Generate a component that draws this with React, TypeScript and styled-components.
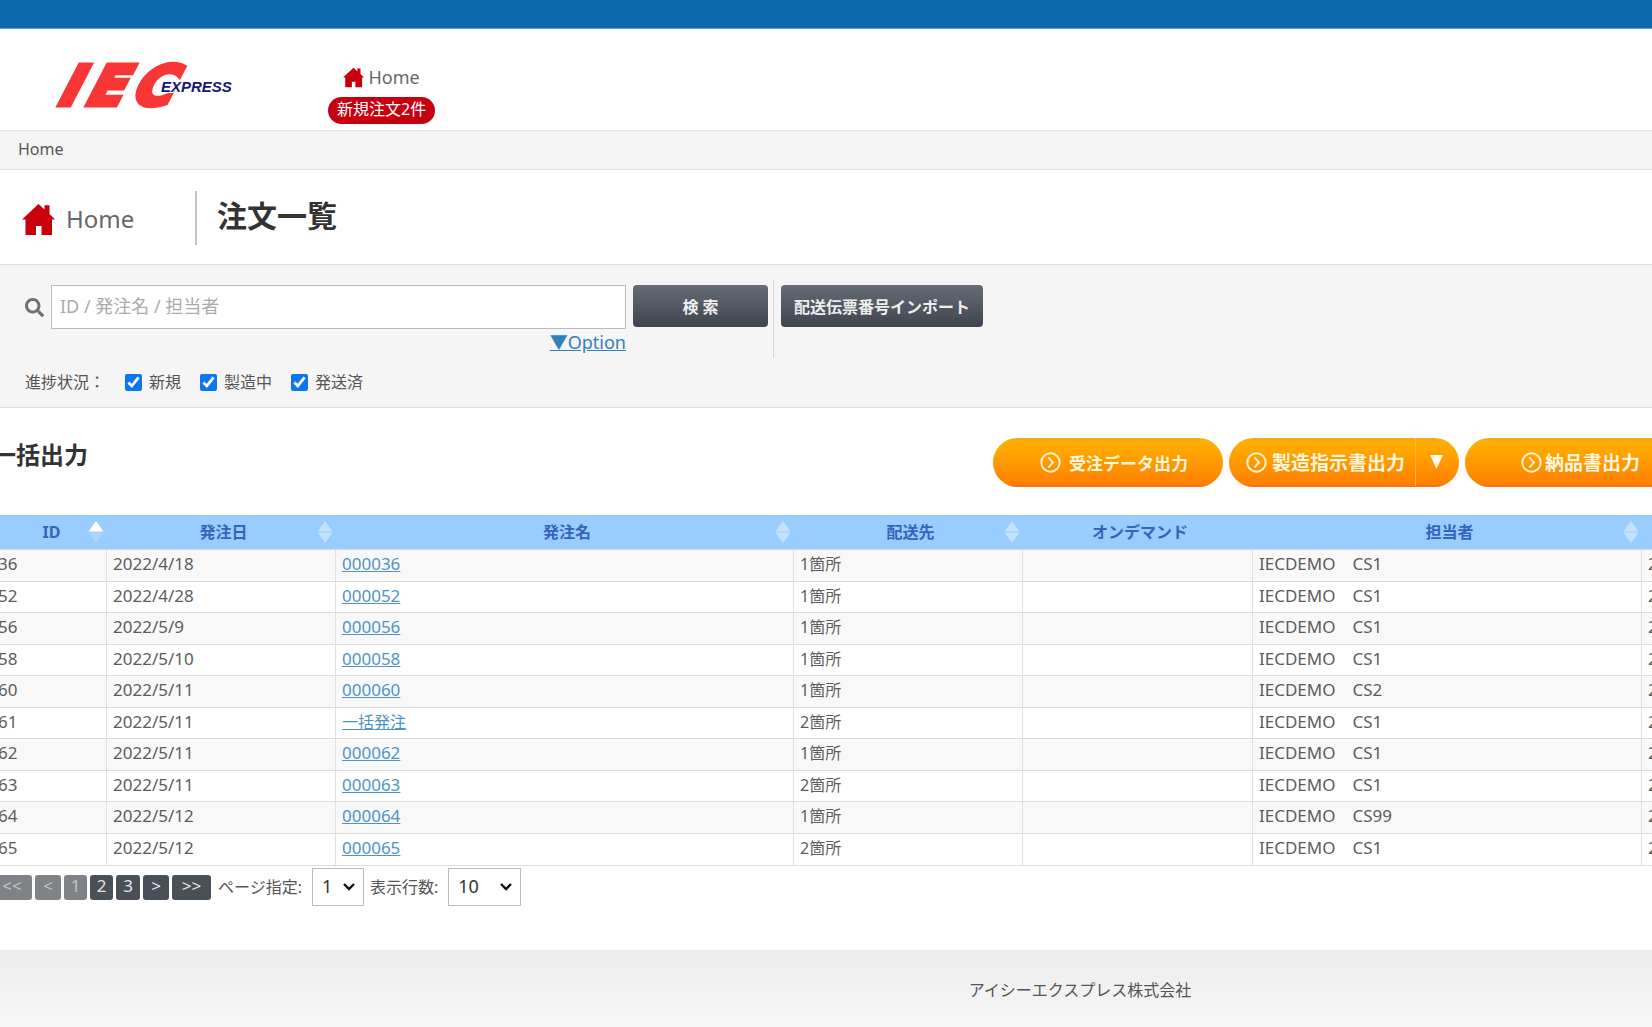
import React from "react";
import styled, { createGlobalStyle } from "styled-components";
import { FaSearch } from "react-icons/fa";

const sans = `"Noto Sans", "Noto Sans CJK JP", sans-serif`;

const GlobalStyle = createGlobalStyle`
  * { box-sizing: border-box; }
  body {
    margin: 0;
    background: #fff;
    color: #555;
    font: 16px/24px ${sans};
  }
`;

const Page = styled.div`
  min-height: 100vh;
  display: flex;
  flex-direction: column;
  overflow: hidden;
`;

const TopBar = styled.div`
  height: 29px;
  background: #0b6aac;
  border-bottom: 1px solid #5f9cc6;
`;

const Header = styled.header`
  height: 102px;
  display: flex;
  align-items: flex-start;
  gap: 91px;
  padding: 32px 0 0 55px;
  border-bottom: 1px solid #dfdfdf;
`;

const Nav = styled.nav`
  display: flex;
  flex-direction: column;
  align-items: center;
  gap: 4px;
`;

const NavLink = styled.a`
  display: flex;
  align-items: center;
  gap: 4px;
  font-size: 18px;
  line-height: 32px;
  color: #666;
  text-decoration: none;
`;

const Badge = styled.a`
  padding: 0 9px 3px;
  border-radius: 14px;
  background: #c7000f;
  color: #fff;
  text-decoration: none;
`;

const Breadcrumb = styled.nav`
  padding: 6px 18px 8px;
  background: #f5f5f5;
  border-bottom: 1px solid #dfdfdf;
`;

const TitleBar = styled.div`
  display: flex;
  align-items: center;
  height: 95px;
  padding: 2px 22px 0;
  border-bottom: 1px solid #dfdfdf;
`;

const Section = styled.div`
  display: flex;
  align-items: center;
  gap: 11px;
  width: 175px;
  height: 54px;
  padding-top: 2px;
  border-right: 2px solid #c4c4c4;
  font-size: 24px;
  color: #666;
`;

const PageTitle = styled.h1`
  margin: 0 0 4px 20px;
  font-size: 30px;
  line-height: 40px;
  color: #333;
`;

const SearchPanel = styled.form`
  height: 143px;
  padding: 15px 25px;
  background: #f5f5f5;
  border-bottom: 1px solid #dfdfdf;
`;

const SearchRow = styled.div`
  display: flex;
  align-items: flex-start;
`;

const SearchLabel = styled.label`
  display: flex;
  width: 26px;
  padding-top: 18px;
  color: #707070;
`;

const SearchField = styled.div`
  display: flex;
  flex-direction: column;
  align-items: flex-end;
  width: 575px;
  padding-top: 5px;
`;

const SearchInput = styled.input`
  width: 100%;
  height: 44px;
  padding: 0 8px 3px;
  border: 1px solid #bbb;
  background: #fff;
  font: 18px ${sans};
  color: #333;
  &::placeholder { color: #aaa; }
`;

const OptionLink = styled.a`
  font-size: 18px;
  line-height: 26px;
  color: #2f83bb;
`;

const ActionCell = styled.div<{ $divided?: boolean }>`
  height: 78px;
  padding: 5px 5px 0 7px;
  border-right: ${(p) => (p.$divided ? "1px solid #d4d4d4" : "0")};
`;

const DarkButton = styled.button<{ $width: number }>`
  width: ${(p) => p.$width}px;
  height: 42px;
  padding: 0 0 1px;
  border: 0;
  border-radius: 4px;
  background: linear-gradient(#666c75, #3e454e);
  color: #eee;
  font: bold 16px ${sans};
`;

const StatusRow = styled.fieldset`
  display: flex;
  align-items: center;
  gap: 19px;
  margin: 0;
  padding: 12px 0 0;
  border: 0;
`;

const StatusCaption = styled.span`
  width: 81px;
  white-space: nowrap;
`;

const CheckLabel = styled.label`
  display: flex;
  align-items: center;
  gap: 7px;
`;

const Checkbox = styled.input`
  width: 17px;
  height: 17px;
  margin: 0;
  accent-color: #0b76ef;
`;

const Main = styled.main`
  margin-left: -8px;
`;

const ExportBar = styled.div`
  width: 115%;
  display: flex;
  justify-content: space-between;
  padding: 30px 206px 28px 0;
`;

const ExportTitle = styled.h2`
  margin: 0;
  font-size: 24px;
  line-height: 34px;
  color: #333;
`;

const ButtonGroup = styled.div`
  display: flex;
  gap: 6px;
`;

const OrangeButton = styled.button<{ $size: number; $gap: number; $start?: number }>`
  display: flex;
  align-items: center;
  justify-content: ${(p) => (p.$start ? "flex-start" : "center")};
  gap: ${(p) => p.$gap}px;
  width: 230px;
  height: 49px;
  padding: 0 0 1px ${(p) => p.$start ?? 12}px;
  border: 0;
  border-radius: 25px;
  background: linear-gradient(#f3a61a, #ffb000 4px, #ff8000 46px, #ee7412);
  color: #fff6dc;
  font: bold ${(p) => p.$size}px ${sans};
  white-space: nowrap;
`;

const SplitArrow = styled.span`
  display: flex;
  align-items: center;
  align-self: stretch;
  margin-left: 5px;
  padding-left: 14px;
  border-left: 1px solid #ffb347;
`;

const Table = styled.table`
  width: 115%;
  table-layout: fixed;
  border-collapse: separate;
  border-spacing: 0;
`;

const Col = styled.col<{ $width?: number }>`
  width: ${(p) => (p.$width ? `${p.$width}px` : "auto")};
`;

const HeadCell = styled.th`
  height: 35px;
  padding: 0;
  background: #99ccff;
  border-bottom: 1px solid #cfdbe6;
  color: #3366bb;
`;

const HeadInner = styled.div`
  display: grid;
  grid-template-columns: 23px 1fr 19px;
  align-items: center;
`;

const Row = styled.tr`
  height: 31px;
  background: #fff;
  &:nth-child(odd) {
    height: 32px;
    background: #f9f8f9;
  }
  &:last-child {
    height: 32px;
  }
`;

const Cell = styled.td<{ $size?: number }>`
  padding: 0 6px 3px;
  border-right: 1px solid #e0e0e0;
  border-bottom: 1px solid #dcdcdc;
  font-size: ${(p) => p.$size ?? 17}px;
  line-height: 26px;
  white-space: nowrap;
  color: #5c5c5c;
`;

const OrderLink = styled.a`
  color: #4f94c4;
`;

const Pager = styled.div`
  display: flex;
  align-items: center;
  gap: 6px;
  height: 42px;
`;

const PageButtons = styled.div`
  display: flex;
  gap: 3px;
  padding-right: 1px;
`;

const PageButton = styled.button<{ $width: number }>`
  width: ${(p) => p.$width}px;
  height: 25px;
  padding: 0 0 2px;
  border: 0;
  border-radius: 3px;
  background: #495057;
  color: #e4e4e4;
  font: 17px/22px ${sans};
  &:disabled {
    background: #7f8387;
    color: #c2c4c6;
  }
`;

const PagerLabel = styled.label`
  display: flex;
  align-items: center;
  gap: 10px;
`;

const PagerSelect = styled.select<{ $width: number }>`
  appearance: none;
  width: ${(p) => p.$width}px;
  height: 38px;
  padding: 0 9px 2px;
  border: 1px solid #bbb;
  border-radius: 0;
  background: #fff
    url("data:image/svg+xml,%3Csvg xmlns='http://www.w3.org/2000/svg' width='12' height='8' fill='none' stroke='%23111' stroke-width='2.4'%3E%3Cpath d='M1 1l5 5 5-5'/%3E%3C/svg%3E")
    no-repeat right 8px center;
  color: #333;
  font: 18px ${sans};
`;

const Footer = styled.footer`
  flex: 1;
  margin-top: 42px;
  padding: 28px 0 25px 508px;
  background: linear-gradient(#ececec, #f7f7f7);
  text-align: center;
`;

const LogoDrawing = styled.svg`
  overflow: visible;
`;

function Logo() {
  return (
    <LogoDrawing width="182" height="54" viewBox="0 0 182 54" role="img" aria-label="IEC EXPRESS">
      <g
        fontFamily="DejaVu Sans"
        fontWeight="bold"
        fontStyle="italic"
        fontSize="55"
        fill="#f93636"
        stroke="#f93636"
        strokeWidth="5"
        transform="translate(0 44) skewX(-18)"
      >
        <text x="3" y="0">I</text>
        <text x="31" y="0">E</text>
        <text x="77" y="0">C</text>
      </g>
      <text
        x="106"
        y="31"
        fontFamily="Liberation Sans"
        fontWeight="bold"
        fontStyle="italic"
        fontSize="15"
        fill="#15157a"
        stroke="#fff"
        strokeWidth="2"
        paintOrder="stroke"
      >
        EXPRESS
      </text>
    </LogoDrawing>
  );
}

function House({ size }: { size: number }) {
  return (
    <svg width={size} height={size} viewBox="0 0 33 31" fill="#c9000a" aria-hidden="true">
      <path d="M16.5 0 22.5 5.6V1.2h5V10l5.5 5.6h-3V31H19.5v-9h-5.500v9H3.500V15.600H0Z" />
    </svg>
  );
}

function CircleChevron() {
  return (
    <svg width="21" height="21" viewBox="0 0 21 21" fill="none" stroke="#fff3c9" strokeWidth="2" aria-hidden="true">
      <circle cx="10.500" cy="10.500" r="9.200" />
      <path d="M8.300 5.300 13 10.500 8.300 15.700" />
    </svg>
  );
}

function SortMark({ ascending }: { ascending?: boolean }) {
  return (
    <svg width="16" height="22" viewBox="0 0 16 22" aria-hidden="true">
      <path d="M8 0 15.500 10.500H.5Z" fill={ascending ? "#fff" : "#c5e2fc"} />
      <path d="M8 22 15.500 11.500H.5Z" fill={ascending ? "#aed6fd" : "#c5e2fc"} />
    </svg>
  );
}

const columns: { title: string; width?: number; sort?: "asc" | "none" }[] = [
  { title: "ID", width: 115, sort: "asc" },
  { title: "発注日", width: 229, sort: "none" },
  { title: "発注名", sort: "none" },
  { title: "配送先", width: 229, sort: "none" },
  { title: "オンデマンド", width: 230 },
  { title: "担当者", width: 389, sort: "none" },
  { title: "", width: 259 },
];

const orders = [
  ["36", "2022/4/18", "000036", "1箇所", "CS1"],
  ["52", "2022/4/28", "000052", "1箇所", "CS1"],
  ["56", "2022/5/9", "000056", "1箇所", "CS1"],
  ["58", "2022/5/10", "000058", "1箇所", "CS1"],
  ["60", "2022/5/11", "000060", "1箇所", "CS2"],
  ["61", "2022/5/11", "一括発注", "2箇所", "CS1"],
  ["62", "2022/5/11", "000062", "1箇所", "CS1"],
  ["63", "2022/5/11", "000063", "2箇所", "CS1"],
  ["64", "2022/5/12", "000064", "1箇所", "CS99"],
  ["65", "2022/5/12", "000065", "2箇所", "CS1"],
];

const pages = [
  { text: "<<", width: 40, off: true },
  { text: "<", width: 26, off: true },
  { text: "1", width: 23, off: true },
  { text: "2", width: 23 },
  { text: "3", width: 24 },
  { text: ">", width: 26 },
  { text: ">>", width: 39 },
];

export default function App() {
  return (
    <Page>
      <GlobalStyle />
      <TopBar />
      <Header>
        <Logo />
        <Nav>
          <NavLink href="#home">
            <House size={21} />
            Home
          </NavLink>
          <Badge href="#new">新規注文2件</Badge>
        </Nav>
      </Header>
      <Breadcrumb>Home</Breadcrumb>
      <TitleBar>
        <Section>
          <House size={33} />
          Home
        </Section>
        <PageTitle>注文一覧</PageTitle>
      </TitleBar>

      <SearchPanel onSubmit={(e) => e.preventDefault()}>
        <SearchRow>
          <SearchLabel htmlFor="keyword" aria-label="キーワード">
            <FaSearch size={19} />
          </SearchLabel>
          <SearchField>
            <SearchInput id="keyword" type="text" placeholder="ID / 発注名 / 担当者" />
            <OptionLink href="#option">▼Option</OptionLink>
          </SearchField>
          <ActionCell $divided>
            <DarkButton $width={135} type="submit">検 索</DarkButton>
          </ActionCell>
          <ActionCell>
            <DarkButton $width={202} type="button">配送伝票番号インポート</DarkButton>
          </ActionCell>
        </SearchRow>
        <StatusRow>
          <StatusCaption>進捗状況：</StatusCaption>
          {["新規", "製造中", "発送済"].map((name) => (
            <CheckLabel key={name}>
              <Checkbox type="checkbox" defaultChecked />
              {name}
            </CheckLabel>
          ))}
        </StatusRow>
      </SearchPanel>

      <Main>
        <ExportBar>
          <ExportTitle>一括出力</ExportTitle>
          <ButtonGroup>
            <OrangeButton $size={17} $gap={8}>
              <CircleChevron />
              受注データ出力
            </OrangeButton>
            <OrangeButton $size={19} $gap={5} $start={17}>
              <CircleChevron />
              製造指示書出力
              <SplitArrow>
                <svg width="13" height="14" viewBox="0 0 13 14" fill="#fffbe8" aria-hidden="true">
                  <path d="M0 0h13L6.500 14Z" />
                </svg>
              </SplitArrow>
            </OrangeButton>
            <OrangeButton $size={19} $gap={3} $start={56}>
              <CircleChevron />
              納品書出力
            </OrangeButton>
          </ButtonGroup>
        </ExportBar>

        <Table>
          <colgroup>
            {columns.map((c, i) => (
              <Col key={i} $width={c.width} />
            ))}
          </colgroup>
          <thead>
            <tr>
              {columns.map((c, i) => (
                <HeadCell key={i}>
                  <HeadInner>
                    <span />
                    <span>{c.title}</span>
                    {c.sort && <SortMark ascending={c.sort === "asc"} />}
                  </HeadInner>
                </HeadCell>
              ))}
            </tr>
          </thead>
          <tbody>
            {orders.map(([id, date, name, places, staff]) => (
              <Row key={id}>
                <Cell>{id}</Cell>
                <Cell>{date}</Cell>
                <Cell $size={/^\d+$/.test(name) ? 17 : 16}>
                  <OrderLink href={`#order-${id}`}>{name}</OrderLink>
                </Cell>
                <Cell $size={16}>{places}</Cell>
                <Cell />
                <Cell>IECDEMO　{staff}</Cell>
                <Cell>{date}</Cell>
              </Row>
            ))}
          </tbody>
        </Table>

        <Pager>
          <PageButtons>
            {pages.map((p) => (
              <PageButton key={p.text} type="button" $width={p.width} disabled={p.off}>
                {p.text}
              </PageButton>
            ))}
          </PageButtons>
          <PagerLabel>
            ページ指定:
            <PagerSelect $width={52} defaultValue="1">
              <option>1</option>
              <option>2</option>
              <option>3</option>
            </PagerSelect>
          </PagerLabel>
          <PagerLabel>
            表示行数:
            <PagerSelect $width={73} defaultValue="10">
              <option>10</option>
              <option>20</option>
              <option>50</option>
            </PagerSelect>
          </PagerLabel>
        </Pager>
      </Main>

      <Footer>アイシーエクスプレス株式会社</Footer>
    </Page>
  );
}
